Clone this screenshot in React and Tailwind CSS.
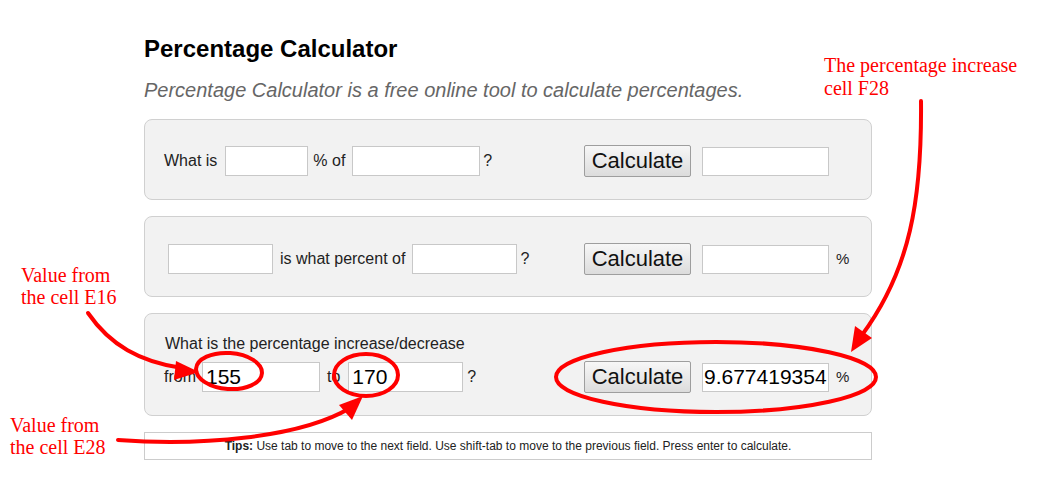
import React from "react";

const inputCls =
  "h-[30px] border border-[#c8c8c8] bg-white px-[3px] text-[21px] text-black outline-none";

function CalcButton() {
  return (
    <button className="h-[32px] w-[107px] rounded-[2px] border border-[#9e9e9e] bg-gradient-to-b from-[#f7f7f7] to-[#dcdcdc] text-[22px] leading-none text-[#111]">
      Calculate
    </button>
  );
}

function RightPart({ value = "", pct = false }) {
  return (
    <div className="flex items-center">
      <CalcButton />
      <input
        readOnly
        value={value}
        className={`ml-[11px] w-[127px] h-[29px] border border-[#c8c8c8] bg-white px-[1px] text-[21px] text-black outline-none`}
      />
      {pct && <span className="ml-[7px] text-[15px] text-[#222]">%</span>}
    </div>
  );
}

const serif = { fontFamily: '"Liberation Serif", "Times New Roman", serif' };

export default function App() {
  return (
    <div
      className="relative h-[478px] w-[1049px] overflow-hidden bg-white"
      style={{ fontFamily: '"Liberation Sans", Arial, sans-serif' }}
    >
      <div className="ml-[144px] w-[728px] pt-[35px]">
        <h1 className="text-[24px] font-bold leading-[28px] text-black">
          Percentage Calculator
        </h1>
        <p className="mt-[15px] text-[20px] italic leading-[24px] text-[#666]">
          Percentage Calculator is a free online tool to calculate percentages.
        </p>

        <div className="mt-[17px] flex flex-col gap-4">
          {/* Panel 1 */}
          <div className="h-[81px] rounded-[8px] border border-[#d0d0d0] bg-[#f2f2f2] pl-[19px] pt-[25px]">
            <div className="flex h-[32px] items-center text-[16px] text-[#222]">
              <div className="flex w-[420px] items-center">
                <span>What is</span>
                <input className={`ml-[8px] w-[83px] ${inputCls}`} />
                <span className="ml-[5px]">% of</span>
                <input className={`ml-[7px] w-[128px] ${inputCls}`} />
                <span className="ml-[3px]">?</span>
              </div>
              <RightPart />
            </div>
          </div>

          {/* Panel 2 */}
          <div className="h-[81px] rounded-[8px] border border-[#d0d0d0] bg-[#f2f2f2] pl-[19px] pt-[26px]">
            <div className="flex h-[32px] items-center text-[16px] text-[#222]">
              <div className="flex w-[420px] items-center">
                <input className={`ml-[4px] w-[105px] ${inputCls}`} />
                <span className="ml-[7px]">is what percent of</span>
                <input className={`ml-[7px] w-[105px] ${inputCls}`} />
                <span className="ml-[3px]">?</span>
              </div>
              <RightPart pct />
            </div>
          </div>

          {/* Panel 3 */}
          <div className="h-[103px] rounded-[8px] border border-[#d0d0d0] bg-[#f2f2f2] pl-[20px] pt-[21px]">
            <div className="text-[16px] leading-[18px] text-[#222]">
              What is the percentage increase/decrease
            </div>
            <div className="-ml-[1px] mt-[8px] flex h-[32px] items-center text-[16px] text-[#222]">
              <div className="flex w-[420px] items-center">
                <span>from</span>
                <input
                  readOnly
                  value="155"
                  className={`ml-[6px] w-[118px] ${inputCls}`}
                />
                <span className="ml-[7px]">to</span>
                <input
                  readOnly
                  value="170"
                  className={`ml-[8px] w-[115px] ${inputCls}`}
                />
                <span className="ml-[4px]">?</span>
              </div>
              <RightPart value="9.677419354" pct />
            </div>
          </div>

          {/* Tips */}
          <div className="flex h-[28px] items-center justify-center border border-[#cccccc] bg-white text-[12px] text-[#222]">
            <span>
              <b>Tips:</b> Use tab to move to the next field. Use shift-tab to
              move to the previous field. Press enter to calculate.
            </span>
          </div>
        </div>
      </div>

      {/* Annotations overlay */}
      <div
        className="pointer-events-none absolute left-[21px] top-[264px] text-[20px] leading-[22px] text-[#ff0000]"
        style={serif}
      >
        Value from
        <br />
        the cell E16
      </div>
      <div
        className="pointer-events-none absolute left-[10px] top-[414px] text-[20px] leading-[22px] text-[#ff0000]"
        style={serif}
      >
        Value from
        <br />
        the cell E28
      </div>
      <div
        className="pointer-events-none absolute left-[824px] top-[54px] text-[20px] leading-[23px] text-[#ff0000]"
        style={serif}
      >
        The percentage increase
        <br />
        cell F28
      </div>

      <svg
        className="pointer-events-none absolute left-0 top-0"
        width="1049"
        height="478"
        viewBox="0 0 1049 478"
      >
        <g fill="none" stroke="#ff0000" strokeWidth="4" strokeLinecap="round">
          <ellipse cx="229" cy="371" rx="33" ry="18" transform="rotate(4 229 371)" />
          <ellipse cx="366" cy="375" rx="32" ry="21" />
          <ellipse cx="716" cy="377" rx="160" ry="35" />
          <path d="M88 313 C 110 345, 140 362, 182 368" />
          <path d="M118 440 C 200 446, 300 438, 350 408" />
          <path d="M921 101 C 922 200, 910 270, 862 335" />
        </g>
        <g fill="#ff0000">
          <polygon points="199,372 176,361 174,380" />
          <polygon points="363,396 339,405 352,420" />
          <polygon points="851,352 855,326 872,338" />
        </g>
      </svg>
    </div>
  );
}
